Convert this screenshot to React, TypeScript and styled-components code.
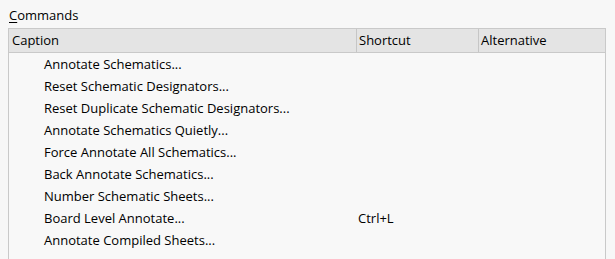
import styled, { createGlobalStyle } from 'styled-components';

const GlobalStyle = createGlobalStyle`
  html, body {
    margin: 0;
    padding: 0;
    background: #f7f7f7;
    overflow: hidden;
  }
  body {
    font-family: "Open Sans", "Noto Sans", "Liberation Sans", sans-serif;
    font-size: 13px;
    color: #000;
  }
`;

const Panel = styled.div`
  width: 615px;
  height: 259px;
  padding: 6px 9px 0 8px;
  box-sizing: border-box;
  display: flex;
  flex-direction: column;
`;

const Label = styled.div`
  padding-left: 1px;
  height: 22px;
  line-height: 18px;

  u {
    text-decoration: underline;
    text-underline-offset: 2px;
  }
`;

const Table = styled.div`
  flex: 1;
  border: 1px solid #c9c9c9;
  border-bottom: none;
  background: #f8f8f8;
`;

const HeaderRow = styled.div`
  display: grid;
  grid-template-columns: 347px 122px 1fr;
  height: 23px;
  background: #e4e4e4;
  border-bottom: 1px solid #c9c9c9;
`;

const HeaderCell = styled.div<{ $divider?: boolean }>`
  padding-left: ${({ $divider }) => ($divider ? '2px' : '3px')};
  line-height: 23px;
  border-left: ${({ $divider }) => ($divider ? '1px solid #c6c6c6' : 'none')};
`;

const Body = styled.div`
  padding-top: 0;
`;

const Row = styled.div`
  display: grid;
  grid-template-columns: 349px 122px 1fr;
  height: 22px;
  line-height: 22px;
`;

const Caption = styled.div`
  padding-left: 35px;
  white-space: nowrap;
`;

const Shortcut = styled.div`
  white-space: nowrap;
`;

const commands = [
  { caption: 'Annotate Schematics...', shortcut: '' },
  { caption: 'Reset Schematic Designators...', shortcut: '' },
  { caption: 'Reset Duplicate Schematic Designators...', shortcut: '' },
  { caption: 'Annotate Schematics Quietly...', shortcut: '' },
  { caption: 'Force Annotate All Schematics...', shortcut: '' },
  { caption: 'Back Annotate Schematics...', shortcut: '' },
  { caption: 'Number Schematic Sheets...', shortcut: '' },
  { caption: 'Board Level Annotate...', shortcut: 'Ctrl+L' },
  { caption: 'Annotate Compiled Sheets...', shortcut: '' },
];

export default function App() {
  return (
    <>
      <GlobalStyle />
      <Panel>
        <Label>
          <u>C</u>ommands
        </Label>
        <Table>
          <HeaderRow>
            <HeaderCell>Caption</HeaderCell>
            <HeaderCell $divider>Shortcut</HeaderCell>
            <HeaderCell $divider>Alternative</HeaderCell>
          </HeaderRow>
          <Body>
            {commands.map((c) => (
              <Row key={c.caption}>
                <Caption>{c.caption}</Caption>
                <Shortcut>{c.shortcut}</Shortcut>
                <div />
              </Row>
            ))}
          </Body>
        </Table>
      </Panel>
    </>
  );
}
